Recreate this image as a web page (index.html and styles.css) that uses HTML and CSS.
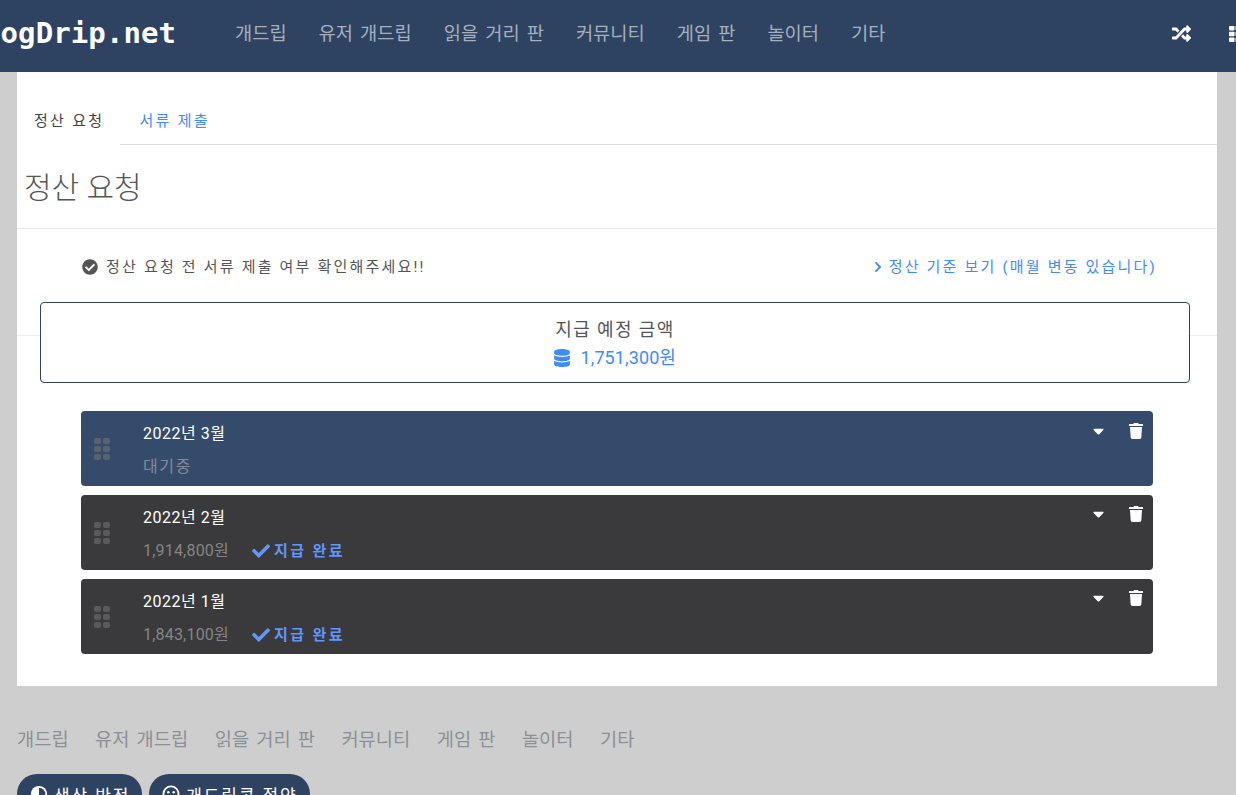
FILE: index.html
```html
<!DOCTYPE html>
<html lang="ko">
<head>
    <meta charset="UTF-8">
    <meta name="viewport" content="width=device-width, initial-scale=1.0">
    <title>정산 요청 - DogDrip.net</title>
    <link rel="stylesheet" href="styles.css">
</head>
<body>
    <header class="topbar">
        <a class="logo">DogDrip.net</a>
        <nav class="topnav">
            <a>개드립</a>
            <a>유저 개드립</a>
            <a>읽을 거리 판</a>
            <a>커뮤니티</a>
            <a>게임 판</a>
            <a>놀이터</a>
            <a>기타</a>
        </nav>
        <div class="topicons">
            <svg class="icon-random" viewBox="0 0 512 512"><path d="M504.971 359.029c9.373 9.373 9.373 24.569 0 33.941l-80 79.984c-15.01 15.01-40.971 4.49-40.971-16.971V416h-58.785a12.004 12.004 0 0 1-8.773-3.812l-70.556-75.596 53.333-57.143L352 336h32v-39.981c0-21.438 25.943-31.998 40.971-16.971l80 79.981zM12 176h84l52.781 56.551 53.333-57.143-70.556-75.596A11.999 11.999 0 0 0 122.785 96H12c-6.627 0-12 5.373-12 12v56c0 6.627 5.373 12 12 12zm372 0v39.984c0 21.46 25.961 31.98 40.971 16.971l80-79.984c9.373-9.373 9.373-24.569 0-33.941l-80-79.981C409.943 24.021 384 34.582 384 56.019V96h-58.785a12.004 12.004 0 0 0-8.773 3.812L96 336H12c-6.627 0-12 5.373-12 12v56c0 6.627 5.373 12 12 12h110.785c3.326 0 6.503-1.381 8.773-3.812L352 176h32z"/></svg>
            <svg class="icon-th" viewBox="0 0 18 16"><rect x="0" y="0" width="5.500" height="4.400" rx=".8"/><rect x="6.500" y="0" width="5" height="4.400" rx=".8"/><rect x="12.500" y="0" width="5.500" height="4.400" rx=".8"/><rect x="0" y="5.800" width="5.500" height="4.400" rx=".8"/><rect x="6.500" y="5.800" width="5" height="4.400" rx=".8"/><rect x="12.500" y="5.800" width="5.500" height="4.400" rx=".8"/><rect x="0" y="11.600" width="5.500" height="4.400" rx=".8"/><rect x="6.500" y="11.600" width="5" height="4.400" rx=".8"/><rect x="12.500" y="11.600" width="5.500" height="4.400" rx=".8"/></svg>
        </div>
    </header>

    <main class="content">
        <ul class="tabs">
            <li class="tab active">정산 요청</li>
            <li class="tab">서류 제출</li>
        </ul>
        <h1 class="page-title">정산 요청</h1>

        <section class="notice-section">
            <div class="notice-row">
                <p class="notice">
                    <svg class="icon-check-circle" viewBox="0 0 512 512"><path d="M504 256c0 136.967-111.033 248-248 248S8 392.967 8 256 119.033 8 256 8s248 111.033 248 248zM227.314 387.314l184-184c6.248-6.248 6.248-16.379 0-22.627l-22.627-22.627c-6.248-6.249-16.379-6.249-22.628 0L216 308.118l-70.059-70.059c-6.248-6.248-16.379-6.248-22.628 0l-22.627 22.627c-6.248 6.248-6.248 16.379 0 22.627l104 104c6.249 6.249 16.379 6.249 22.628.001z"/></svg>
                    정산 요청 전 서류 제출 여부 확인해주세요!!
                </p>
                <a class="criteria-link">
                    <svg class="icon-chevron" viewBox="0 0 320 512"><path d="M285.476 272.971L91.132 467.314c-9.373 9.373-24.569 9.373-33.941 0l-22.667-22.667c-9.357-9.357-9.375-24.522-.04-33.901L188.505 256 34.484 101.255c-9.335-9.379-9.317-24.544.04-33.901l22.667-22.667c9.373-9.373 24.569-9.373 33.941 0L285.475 239.03c9.373 9.372 9.373 24.568.001 33.941z"/></svg>
                    정산 기준 보기 (매월 변동 있습니다)
                </a>
            </div>
        </section>

        <div class="amount-box">
            <div class="amount-label">지급 예정 금액</div>
            <div class="amount-value">
                <svg class="icon-database" viewBox="0 0 448 512"><path d="M448 73.143v45.714C448 159.143 347.667 192 224 192S0 159.143 0 118.857V73.143C0 32.857 100.333 0 224 0s224 32.857 224 73.143zM448 176v102.857C448 319.143 347.667 352 224 352S0 319.143 0 278.857V176c48.125 33.143 136.208 48.572 224 48.572S399.874 209.143 448 176zm0 160v102.857C448 479.143 347.667 512 224 512S0 479.143 0 438.857V336c48.125 33.143 136.208 48.572 224 48.572S399.874 369.143 448 336z"/></svg>
                1,751,300원
            </div>
        </div>

        <div class="months">
            <article class="month pending">
                <svg class="grip" viewBox="0 0 16 22"><rect x="0" y="0" width="7" height="6" rx="2"/><rect x="9" y="0" width="7" height="6" rx="2"/><rect x="0" y="8" width="7" height="6" rx="2"/><rect x="9" y="8" width="7" height="6" rx="2"/><rect x="0" y="16" width="7" height="6" rx="2"/><rect x="9" y="16" width="7" height="6" rx="2"/></svg>
                <div class="month-body">
                    <div class="month-title">2022년 3월</div>
                    <div class="month-info"><span class="month-status">대기중</span></div>
                </div>
                <div class="month-actions">
                    <svg class="icon-caret" viewBox="0 0 320 512"><path d="M31.3 192h257.3c17.8 0 26.7 21.5 14.1 34.1L174.1 354.8c-7.8 7.8-20.5 7.8-28.3 0L17.2 226.1C4.6 213.5 13.5 192 31.3 192z"/></svg>
                    <svg class="icon-trash" viewBox="0 0 448 512"><path d="M432 32H312l-9.4-18.7A24 24 0 0 0 281.1 0H166.8a23.72 23.72 0 0 0-21.4 13.3L136 32H16A16 16 0 0 0 0 48v32a16 16 0 0 0 16 16h416a16 16 0 0 0 16-16V48a16 16 0 0 0-16-16zM53.2 467a48 48 0 0 0 47.9 45h245.8a48 48 0 0 0 47.9-45L416 128H32z"/></svg>
                </div>
            </article>
            <article class="month">
                <svg class="grip" viewBox="0 0 16 22"><rect x="0" y="0" width="7" height="6" rx="2"/><rect x="9" y="0" width="7" height="6" rx="2"/><rect x="0" y="8" width="7" height="6" rx="2"/><rect x="9" y="8" width="7" height="6" rx="2"/><rect x="0" y="16" width="7" height="6" rx="2"/><rect x="9" y="16" width="7" height="6" rx="2"/></svg>
                <div class="month-body">
                    <div class="month-title">2022년 2월</div>
                    <div class="month-info">
                        <span class="month-amount">1,914,800원</span>
                        <span class="paid"><svg class="icon-check" viewBox="0 0 512 512"><path d="M173.898 439.404l-166.4-166.4c-9.997-9.997-9.997-26.206 0-36.204l36.203-36.204c9.997-9.998 26.207-9.998 36.204 0L192 312.69 432.095 72.596c9.997-9.997 26.207-9.997 36.204 0l36.203 36.204c9.997 9.997 9.997 26.206 0 36.204l-294.4 294.401c-9.998 9.997-26.207 9.997-36.204-.001z"/></svg>지급 완료</span>
                    </div>
                </div>
                <div class="month-actions shifted">
                    <svg class="icon-caret" viewBox="0 0 320 512"><path d="M31.3 192h257.3c17.8 0 26.7 21.5 14.1 34.1L174.1 354.8c-7.8 7.8-20.5 7.8-28.3 0L17.2 226.1C4.6 213.5 13.5 192 31.3 192z"/></svg>
                    <svg class="icon-trash" viewBox="0 0 448 512"><path d="M432 32H312l-9.4-18.7A24 24 0 0 0 281.1 0H166.8a23.72 23.72 0 0 0-21.4 13.3L136 32H16A16 16 0 0 0 0 48v32a16 16 0 0 0 16 16h416a16 16 0 0 0 16-16V48a16 16 0 0 0-16-16zM53.2 467a48 48 0 0 0 47.9 45h245.8a48 48 0 0 0 47.9-45L416 128H32z"/></svg>
                </div>
            </article>
            <article class="month">
                <svg class="grip" viewBox="0 0 16 22"><rect x="0" y="0" width="7" height="6" rx="2"/><rect x="9" y="0" width="7" height="6" rx="2"/><rect x="0" y="8" width="7" height="6" rx="2"/><rect x="9" y="8" width="7" height="6" rx="2"/><rect x="0" y="16" width="7" height="6" rx="2"/><rect x="9" y="16" width="7" height="6" rx="2"/></svg>
                <div class="month-body">
                    <div class="month-title">2022년 1월</div>
                    <div class="month-info">
                        <span class="month-amount">1,843,100원</span>
                        <span class="paid"><svg class="icon-check" viewBox="0 0 512 512"><path d="M173.898 439.404l-166.4-166.4c-9.997-9.997-9.997-26.206 0-36.204l36.203-36.204c9.997-9.998 26.207-9.998 36.204 0L192 312.69 432.095 72.596c9.997-9.997 26.207-9.997 36.204 0l36.203 36.204c9.997 9.997 9.997 26.206 0 36.204l-294.4 294.401c-9.998 9.997-26.207 9.997-36.204-.001z"/></svg>지급 완료</span>
                    </div>
                </div>
                <div class="month-actions shifted">
                    <svg class="icon-caret" viewBox="0 0 320 512"><path d="M31.3 192h257.3c17.8 0 26.7 21.5 14.1 34.1L174.1 354.8c-7.8 7.8-20.5 7.8-28.3 0L17.2 226.1C4.6 213.5 13.5 192 31.3 192z"/></svg>
                    <svg class="icon-trash" viewBox="0 0 448 512"><path d="M432 32H312l-9.4-18.7A24 24 0 0 0 281.1 0H166.8a23.72 23.72 0 0 0-21.4 13.3L136 32H16A16 16 0 0 0 0 48v32a16 16 0 0 0 16 16h416a16 16 0 0 0 16-16V48a16 16 0 0 0-16-16zM53.2 467a48 48 0 0 0 47.9 45h245.8a48 48 0 0 0 47.9-45L416 128H32z"/></svg>
                </div>
            </article>
        </div>
    </main>

    <footer class="footer">
        <nav class="footnav">
            <a>개드립</a>
            <a>유저 개드립</a>
            <a>읽을 거리 판</a>
            <a>커뮤니티</a>
            <a>게임 판</a>
            <a>놀이터</a>
            <a>기타</a>
        </nav>
        <div class="pills">
            <a class="pill">
                <svg class="pill-icon" viewBox="0 0 20 20"><circle cx="10" cy="10" r="9" fill="#fff"/><path d="M10 3a7 7 0 0 1 0 14z" fill="#2e4361"/></svg>
                색상 반전
            </a>
            <a class="pill">
                <svg class="pill-icon" viewBox="0 0 20 20"><circle cx="10" cy="10" r="8.400" fill="none" stroke="#fff" stroke-width="2"/><circle cx="7" cy="8" r="1.400" fill="#fff"/><circle cx="13" cy="8" r="1.400" fill="#fff"/><path d="M6 13c2.400 2.400 5.600 2.400 8 0" fill="none" stroke="#fff" stroke-width="1.600"/></svg>
                개드립콘 절약
            </a>
        </div>
    </footer>
</body>
</html>
```

FILE: styles.css
```css
html, body {
    height: 795px;
    overflow: hidden;
}
body {
    margin: 0;
    background-color: #cecece;
    color: #555;
    font-family: Roboto, "Noto Sans CJK KR", sans-serif;
    font-size: 16px;
}
svg {
    fill: currentColor;
    flex: none;
}
p, h1, ul {
    margin: 0;
    padding: 0;
}

/* top bar */
.topbar {
    display: flex;
    align-items: center;
    height: 72px;
    background-color: #2e4361;
    overflow: hidden;
}
.logo {
    flex: none;
    width: 252px;
    margin-left: -17px;
    margin-top: -6px;
    color: #fff;
    font-family: "DejaVu Sans Mono", monospace;
    font-size: 29px;
    font-weight: bold;
    letter-spacing: 0.1px;
    white-space: nowrap;
}
.topnav {
    display: flex;
    gap: 32px;
    color: #a5afbd;
    font-size: 18.7px;
    word-spacing: 2.5px;
    margin-top: -10px;
}
.topicons {
    display: flex;
    align-items: center;
    margin-left: auto;
    color: #fff;
    margin-top: -5px;
}
.icon-random {
    width: 19px;
    height: 19px;
    margin-right: 38px;
}
.icon-th {
    width: 18px;
    height: 16px;
    margin-right: -11px;
}

/* main white panel */
.content {
    margin: 0 19px 0 17px;
    height: 614px;
    background-color: #fff;
}
.tabs {
    display: flex;
    list-style: none;
    padding-top: 20px;
}
.tab {
    flex: none;
    height: 35px;
    padding: 17px 16px 0 17px;
    border-bottom: 1px solid #ddd;
    font-size: 15px;
    letter-spacing: 2.3px;
    line-height: 24px;
    color: #3f8cff;
}
.tab.active {
    color: #444;
    border-bottom-color: transparent;
}
.tab + .tab {
    padding-left: 19px;
}
.tabs::after {
    content: "";
    flex: 1;
    border-bottom: 1px solid #ddd;
}
.page-title {
    height: 83px;
    padding-left: 7px;
    border-bottom: 1px solid #e8e8e8;
    font-size: 30px;
    font-weight: 300;
    line-height: 86px;
    color: #555;
}
.notice-section {
    height: 106px;
    border-bottom: 1px solid #eee;
}
.notice-row {
    display: flex;
    justify-content: space-between;
    align-items: center;
    padding: 26px 62px 0 65px;
    font-size: 15px;
    letter-spacing: 2.2px;
    line-height: 24px;
}
.notice {
    display: flex;
    align-items: center;
    gap: 8px;
}
.icon-check-circle {
    width: 16px;
    height: 16px;
}
.criteria-link {
    display: flex;
    align-items: center;
    gap: 7px;
    color: #3f8cff;
    margin-right: -2px;
}
.icon-chevron {
    width: 8px;
    height: 12px;
}

/* amount box sits over the section rule */
.amount-box {
    position: relative;
    margin: -34px 27px 0 23px;
    height: 79px;
    border: 1px solid #2e4361;
    border-radius: 4px;
    background-color: #fff;
    text-align: center;
    font-size: 18px;
    line-height: 28px;
}
.amount-label {
    padding-top: 13px;
    letter-spacing: 1.4px;
}
.amount-value {
    color: #3f8cff;
    letter-spacing: 0.1px;
}
.icon-database {
    width: 16px;
    height: 18px;
    margin-right: 6px;
    vertical-align: -3px;
}

/* monthly rows */
.months {
    display: flex;
    flex-direction: column;
    gap: 9px;
    margin: 28px 64px 0;
}
.month {
    display: flex;
    height: 75px;
    border-radius: 4px;
    background-color: #3a3a3c;
    color: #fff;
}
.month.pending {
    background-color: #344b6c;
}
.grip {
    width: 16px;
    height: 22px;
    margin: 27px 33px 0 13px;
    color: #5a5a5c;
}
.month.pending .grip {
    color: #5a6270;
}
.month-body {
    flex: 1;
}
.month-title {
    margin-top: 11px;
    line-height: 24px;
    font-size: 16px;
    letter-spacing: 0.5px;
}
.month-info {
    display: flex;
    align-items: center;
    gap: 23px;
    margin-top: 9px;
    line-height: 24px;
}
.month-amount {
    color: #858585;
    letter-spacing: 0.2px;
}
.month-status {
    color: #858b96;
    letter-spacing: 1.6px;
}
.paid {
    display: flex;
    align-items: center;
    gap: 4px;
    color: #5f97ff;
    font-weight: bold;
    font-size: 15px;
    letter-spacing: 2.4px;
}
.icon-check {
    width: 18px;
    height: 18px;
}
.month-actions {
    display: flex;
    align-items: flex-start;
    padding: 11px 10px 0 0;
    gap: 25px;
}
.month-actions.shifted {
    padding-top: 10px;
}
.icon-caret {
    width: 11px;
    height: 18px;
}
.icon-trash {
    width: 14px;
    height: 16px;
    margin-top: 1px;
}

/* footer */
.footer {
    padding: 41px 17px 0;
    color: #8d9095;
}
.footnav {
    display: flex;
    gap: 26.5px;
    font-size: 18.7px;
    word-spacing: 2.5px;
    line-height: 26px;
}
.pills {
    display: flex;
    gap: 7px;
    margin-top: 21px;
}
.pill {
    display: flex;
    align-items: center;
    gap: 6px;
    height: 40px;
    padding: 0 12px 0 13px;
    border-radius: 20px;
    background-color: #2e4361;
    color: #fff;
    font-size: 17px;
    letter-spacing: 1.9px;
}
.pill-icon {
    width: 18px;
    height: 18px;
}
```
